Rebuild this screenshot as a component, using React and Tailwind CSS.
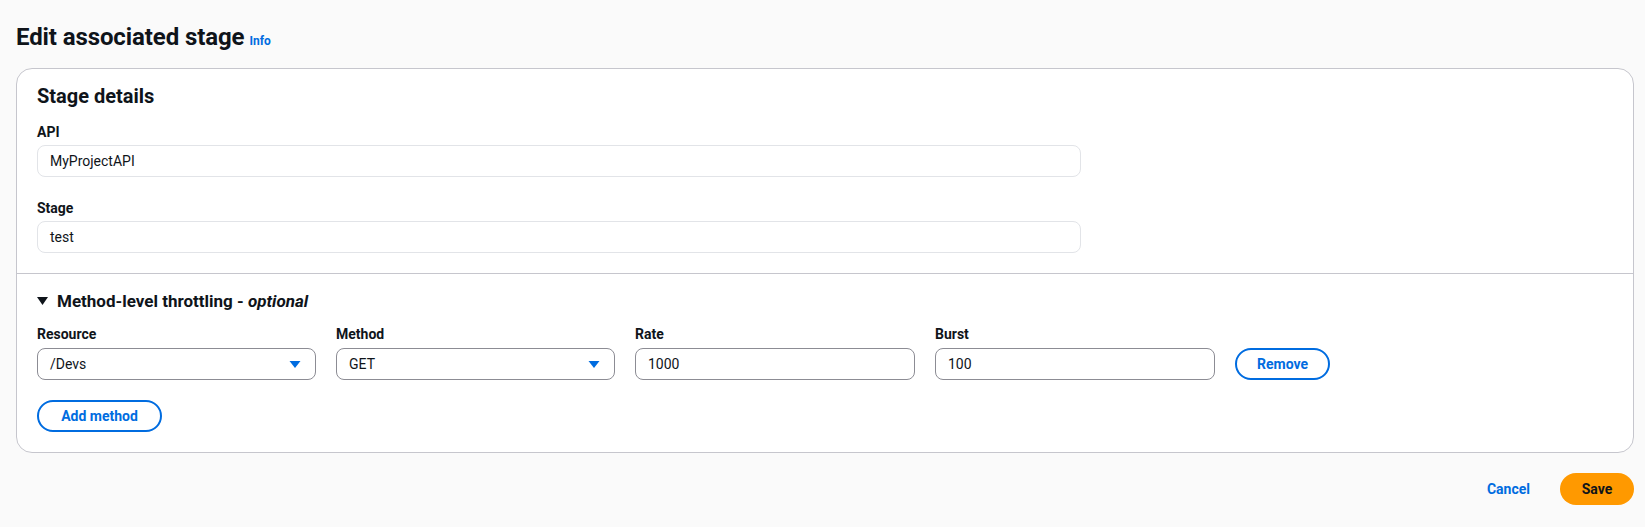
import { useState } from "react";

const font = { fontFamily: "Roboto, 'Open Sans', Arial, sans-serif" };

const Caret = ({ className }) => (
  <svg viewBox="0 0 16 16" className={className} aria-hidden="true">
    <path d="M2.5 5h11L8 12z" fill="currentColor" />
  </svg>
);

const ReadField = ({ label, value, className = "" }) => (
  <div className={className}>
    <label className="block text-sm leading-[18px] font-bold text-[#0f141a]">{label}</label>
    <div className="mt-1 flex h-8 w-[1044px] items-center rounded-lg border border-[#e2e4e8] bg-white px-3 text-sm text-[#0f141a]">
      {value}
    </div>
  </div>
);

const SelectField = ({ label, value }) => (
  <div className="w-[279px]">
    <label className="block text-sm leading-[18px] font-bold text-[#0f141a]">{label}</label>
    <button className="mt-[5px] flex h-8 w-full items-center justify-between rounded-lg border border-[#8c8c94] bg-white pl-3 pr-3 text-sm text-[#0f141a]">
      <span>{value}</span>
      <Caret className="h-4 w-4 text-[#006ce0]" />
    </button>
  </div>
);

const InputField = ({ label, value }) => (
  <div className="w-[280px]">
    <label className="block text-sm leading-[18px] font-bold text-[#0f141a]">{label}</label>
    <input
      defaultValue={value}
      className="mt-[5px] h-8 w-full rounded-lg border border-[#8c8c94] bg-white px-3 text-sm text-[#0f141a] outline-none"
    />
  </div>
);

export default function App() {
  const [open, setOpen] = useState(true);

  return (
    <div style={font} className="min-h-screen bg-[#fafafa] pl-4 pr-[11px] pt-[22px] text-[#0f141a]">
      {/* Page header */}
      <div className="flex items-baseline gap-[5px]">
        <h1 className="text-2xl leading-[30px] font-bold tracking-[-0.1px]">Edit associated stage</h1>
        <a className="text-xs font-bold text-[#006ce0]">Info</a>
      </div>

      {/* Container */}
      <div className="mt-4 rounded-2xl border border-[#c6c6cd] bg-white">
        <div className="px-5 pt-4 pb-5">
          <h2 className="text-xl leading-[22px] font-bold">Stage details</h2>
          <ReadField className="mt-4" label="API" value="MyProjectAPI" />
          <ReadField className="mt-[22px]" label="Stage" value="test" />
        </div>

        <div className="border-t border-[#c6c6cd] px-5 pt-4 pb-5">
          <button onClick={() => setOpen(!open)} className="flex items-center gap-[9px] text-[17px] leading-[22px] font-bold">
            <svg width="11" height="8" viewBox="0 0 11 8">
              <path d="M0 0h11L5.5 8z" fill="#0f141a" />
            </svg>
            <span>
              Method-level throttling - <i>optional</i>
            </span>
          </button>

          {open && (
            <>
              <div className="mt-[13px] flex items-end gap-5">
                <SelectField label="Resource" value="/Devs" />
                <SelectField label="Method" value="GET" />
                <InputField label="Rate" value="1000" />
                <InputField label="Burst" value="100" />
                <button className="h-8 w-[95px] rounded-full border-2 border-[#006ce0] text-sm font-bold text-[#006ce0]">
                  Remove
                </button>
              </div>
              <button className="mt-5 h-8 w-[125px] rounded-full border-2 border-[#006ce0] text-sm font-bold text-[#006ce0]">
                Add method
              </button>
            </>
          )}
        </div>
      </div>

      {/* Actions */}
      <div className="mt-5 flex items-center justify-end gap-[30px]">
        <button className="text-sm font-bold text-[#006ce0]">Cancel</button>
        <button className="h-8 w-[74px] rounded-full bg-[#ff9900] text-sm font-bold text-[#0f141a]">Save</button>
      </div>
    </div>
  );
}
